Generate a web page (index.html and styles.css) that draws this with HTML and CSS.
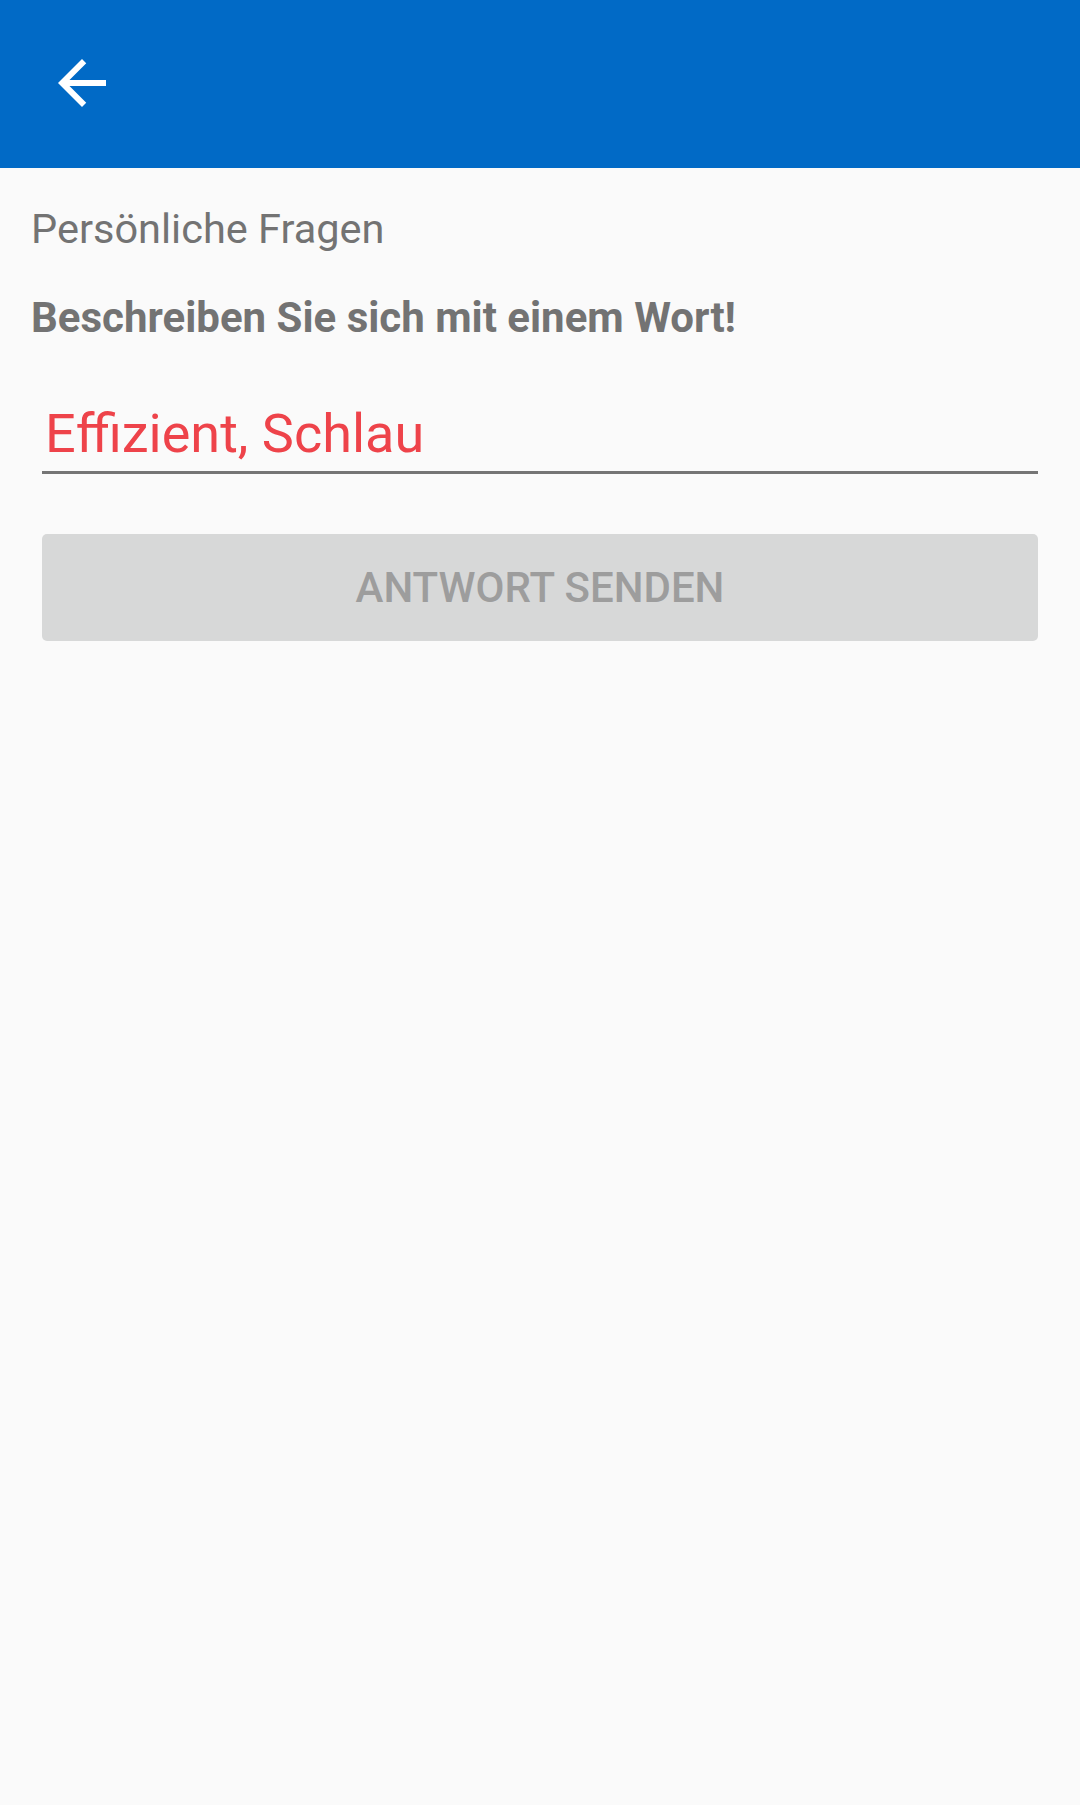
FILE: index.html
```html
<!DOCTYPE html>
<html lang="de">
<head>
<meta charset="utf-8">
<title>Persönliche Fragen</title>
<link rel="stylesheet" href="styles.css">
</head>
<body>
<header class="appbar">
  <button class="back" aria-label="Zurück">
    <svg width="72" height="72" viewBox="0 0 24 24"><path d="M20 11H7.83l5.59-5.59L12 4l-8 8 8 8 1.41-1.41L7.83 13H20v-2z" fill="#fff"/></svg>
  </button>
</header>
<main class="content">
  <div class="category">Persönliche Fragen</div>
  <div class="question">Beschreiben Sie sich mit einem Wort!</div>
  <div class="form">
    <div class="field">Effizient, Schlau</div>
    <button class="send">ANTWORT SENDEN</button>
  </div>
</main>
</body>
</html>
```

FILE: styles.css
```css
html, body {
  margin: 0;
  padding: 0;
  background: #fafafa;
  font-family: Roboto, "Liberation Sans", sans-serif;
}
.appbar {
  height: 168px;
  background: #016ac6;
  display: flex;
  align-items: center;
  padding-left: 46px;
}
.back {
  border: 0;
  background: none;
  padding: 0;
  width: 72px;
  height: 72px;
  display: flex;
  margin-top: -2px;
}
.content {
  padding: 0 42px 0 31px;
}
.category {
  margin-top: 37px;
  font-size: 41.5px;
  line-height: 47px;
  color: #737373;
}
.question {
  margin-top: 42px;
  font-size: 42px;
  line-height: 47px;
  font-weight: 700;
  color: #737373;
}
.form {
  padding-left: 11px;
}
.field {
  margin-top: 61px;
  font-size: 54px;
  line-height: 63px;
  color: #ee434a;
  padding: 0 0 6px 3px;
  border-bottom: 3px solid #757575;
}
.send {
  margin-top: 60px;
  width: 100%;
  height: 107px;
  border: 0;
  border-radius: 5px;
  background: #d7d8d8;
  color: #9d9d9d;
  font-family: Roboto, "Liberation Sans", sans-serif;
  font-size: 42px;
  font-weight: 500;
  display: flex;
  align-items: center;
  justify-content: center;
  padding: 0;
}
```
